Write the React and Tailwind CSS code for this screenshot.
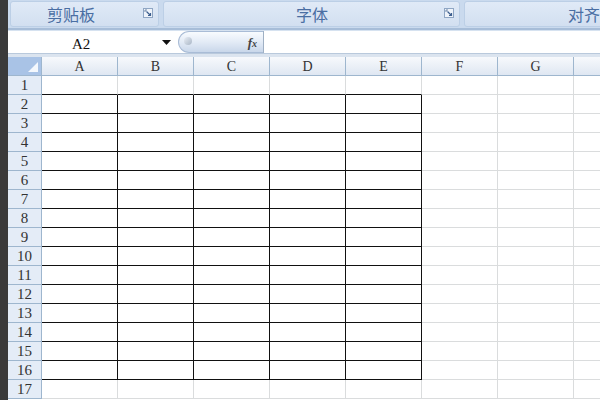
import React from "react";

const COLS = ["A", "B", "C", "D", "E", "F", "G", ""];
const ROWS = Array.from({ length: 17 }, (_, i) => i + 1);

function Launcher() {
  return (
    <svg width="10" height="10" viewBox="0 0 10 10" className="block">
      <rect x="0.5" y="0.5" width="9" height="9" fill="#eef3fa" stroke="#8fa6c4" />
      <path d="M2 2 L2 4 M2 2 L4 2" stroke="#6f87a8" strokeWidth="1" fill="none" />
      <path d="M3.5 3.5 L7.5 7.5 M7.5 5 L7.5 7.5 L5 7.5" stroke="#3d5f8f" strokeWidth="1.2" fill="none" />
    </svg>
  );
}

function Group({ label, width, launcherLeft, labelLeft }) {
  return (
    <div
      className="relative h-[26px] mt-[1px] rounded-[3px] border border-[#bccfe6] bg-gradient-to-b from-[#e0eaf7] to-[#d2dff0] shrink-0 overflow-hidden"
      style={{ width }}
    >
      <span
        className="absolute top-[2px] text-[16px] leading-[20px] text-[#4a6ea3] whitespace-nowrap"
        style={{ left: labelLeft, fontFamily: '"Noto Sans CJK SC", "Noto Sans", sans-serif' }}
      >
        {label}
      </span>
      {launcherLeft != null && (
        <div className="absolute top-[6px]" style={{ left: launcherLeft }}>
          <Launcher />
        </div>
      )}
    </div>
  );
}

export default function App() {
  const serif = { fontFamily: '"Liberation Serif", "DejaVu Serif", serif' };
  return (
    <div className="w-[600px] h-[400px] overflow-hidden flex bg-white">
      <div className="w-[8px] h-full bg-[#3a3a3a] shrink-0" />
      <div className="flex-1 flex flex-col min-w-0">
        {/* Ribbon */}
        <div className="h-[28px] bg-[#cadaee] flex gap-[4px] pl-[2px] shrink-0 overflow-hidden">
          <Group label="剪贴板" width={149} labelLeft={36} launcherLeft={132} />
          <Group label="字体" width={297} labelLeft={132} launcherLeft={280} />
          <Group label="对齐" width={200} labelLeft={103} />
        </div>
        <div className="h-[3px] bg-[#a7bdd8] border-b border-[#d6e2f0] shrink-0" />
        {/* Formula bar */}
        <div className="h-[22px] flex bg-white shrink-0">
          <div className="w-[170px] flex items-center relative shrink-0">
            <span className="absolute left-[64px] top-[2px] text-[15px] text-[#111]" style={serif}>A2</span>
            <svg width="9" height="5" viewBox="0 0 9 5" className="absolute left-[154px] top-[9px]">
              <path d="M0 0 L9 0 L4.5 5 Z" fill="#111" />
            </svg>
          </div>
          <div className="w-[85px] h-full relative shrink-0 rounded-l-[11px] border border-r-0 border-[#a9bcd6] bg-gradient-to-b from-[#f8fbfe] via-[#e3ebf6] to-[#c9d7ea]">
            <div className="absolute left-[5px] top-[5px] w-[8px] h-[8px] rounded-full bg-gradient-to-br from-[#e9eef5] to-[#a9b6c6]" />
            <span
              className="absolute right-[6px] top-[1px] text-[13px] italic font-bold text-[#444]"
              style={serif}
            >
              f<span className="text-[10px]">x</span>
            </span>
          </div>
          <div className="flex-1 border-l border-[#9fb0c4] bg-white" />
        </div>
        <div className="h-[4px] bg-[#dbe4ef] border-t border-[#b9c9dc] shrink-0" />
        {/* Grid */}
        <div
          className="grid"
          style={{
            gridTemplateColumns: "34px repeat(8, 76px)",
            gridTemplateRows: "19px repeat(17, 19px)",
          }}
        >
          <div className="relative bg-[#a9c3e6] border-r border-b border-[#9eb6ce]">
            <svg width="10" height="10" viewBox="0 0 10 10" className="absolute right-[3px] bottom-[3px]">
              <path d="M10 0 L10 10 L0 10 Z" fill="#f4f8fd" />
            </svg>
          </div>
          {COLS.map((c, i) => (
            <div
              key={i}
              className="flex items-center justify-center border-r border-b border-[#9eb6ce] bg-gradient-to-b from-[#f7f9fc] to-[#dfe7f2] text-[14px] text-[#333]"
              style={serif}
            >
              {c}
            </div>
          ))}
          {ROWS.map((r) => (
            <React.Fragment key={r}>
              <div
                className="flex items-center justify-center border-r border-b border-[#9eb6ce] bg-[#e4ecf7] text-[15px] text-[#333]"
                style={serif}
              >
                {r}
              </div>
              {COLS.map((c, ci) => {
                const inBox = r >= 2 && r <= 16 && ci <= 4;
                const aboveBox = r === 1 && ci <= 4;
                const rightDark = inBox;
                const bottomDark = inBox || aboveBox;
                return (
                  <div
                    key={ci}
                    className={
                      "border-r border-b " +
                      (rightDark ? "border-r-[#111] " : "border-r-[#dadcdd] ") +
                      (bottomDark ? "border-b-[#111]" : "border-b-[#dadcdd]")
                    }
                  />
                );
              })}
            </React.Fragment>
          ))}
        </div>
      </div>
    </div>
  );
}
